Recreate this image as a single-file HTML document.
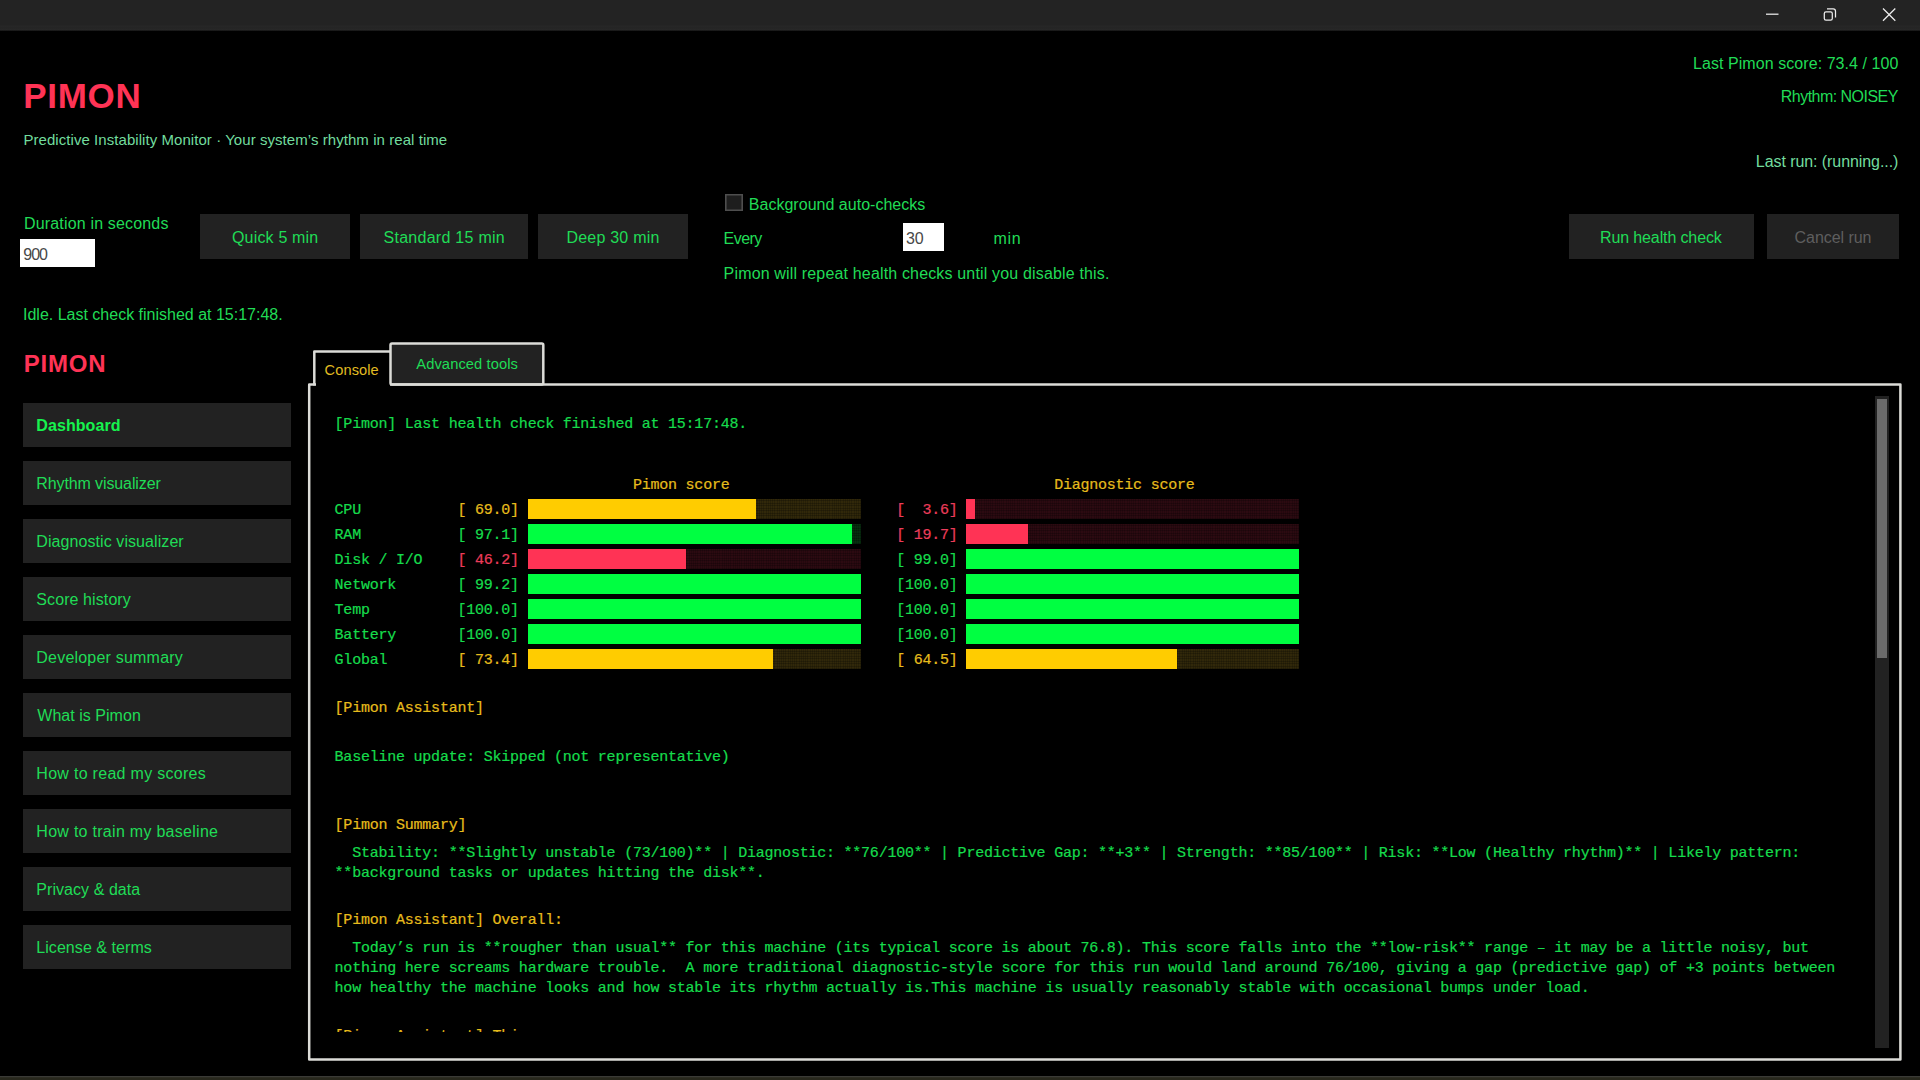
<!DOCTYPE html>
<html><head><meta charset="utf-8"><title>PIMON</title>
<style>
html,body{margin:0;padding:0;background:#000;}
body{width:1920px;height:1080px;position:relative;overflow:hidden;font-family:"Liberation Sans",sans-serif;}
.t{position:absolute;white-space:pre;line-height:40px;height:40px;font-family:"Liberation Sans",sans-serif;}
.m{position:absolute;white-space:pre;line-height:40px;height:40px;font-family:"Liberation Mono",monospace;font-size:15px;letter-spacing:-0.2266px;-webkit-text-stroke:0.22px currentColor;}
.box{position:absolute;background:#222;}
.sbtn{position:absolute;left:22.6px;width:268.2px;height:44.6px;background:#222;}
.bar{position:absolute;height:20px;background-image:repeating-linear-gradient(0deg,rgba(0,0,0,.22) 0 1px,rgba(0,0,0,0) 1px 2.5px),repeating-linear-gradient(90deg,rgba(0,0,0,.18) 0 1px,rgba(0,0,0,0) 1px 2.2px);}
.bar i{position:absolute;left:0;top:0;height:20px;display:block;}
#titlebar{position:absolute;left:0;top:0;width:1920px;height:31.4px;background:linear-gradient(#232323 0,#232323 25px,#272727 26px,#262626 27px,#242424 28px,#282828 29.2px,#262626 30.1px,#000 31.3px);}
#clip{position:absolute;left:310px;top:385px;width:1560px;height:646.6px;overflow:hidden;}
</style></head><body>
<div id="titlebar"></div>
<svg style="position:absolute;left:1740px;top:0" width="180" height="30" viewBox="0 0 180 30" fill="none" stroke="#ececec" stroke-width="1.25">
<path d="M26 14.2H38.5"/>
<rect x="84.3" y="11.8" width="8" height="8.4" rx="1.7"/>
<path d="M87 8.9H93.2A2.3 2.3 0 0 1 95.5 11.2V17.6"/>
<path d="M143 8.5L155.3 20.8M155.3 8.5L143 20.8"/>
</svg>
<div class="box" style="left:200px;top:214px;width:150.2px;height:44.5px"></div>
<div class="box" style="left:360.2px;top:214px;width:167.8px;height:44.5px"></div>
<div class="box" style="left:538px;top:214px;width:150px;height:44.5px"></div>
<div class="box" style="left:1569.3px;top:214px;width:184.6px;height:44.5px"></div>
<div class="box" style="left:1767.2px;top:214px;width:132px;height:44.5px;background:#212121"></div>
<div style="position:absolute;left:20px;top:239px;width:75px;height:27.6px;background:#fff"></div>
<div style="position:absolute;left:903px;top:223.3px;width:40.6px;height:27.3px;background:#fff"></div>
<div style="position:absolute;left:725.4px;top:194px;width:17.4px;height:17.2px;background:#1e1e1e;box-shadow:inset 0 0 0 1.6px #4e4e4e;"></div>
<div class="sbtn" style="top:402.8px"></div><div class="sbtn" style="top:460.8px"></div><div class="sbtn" style="top:518.8px"></div><div class="sbtn" style="top:576.8px"></div><div class="sbtn" style="top:634.8px"></div><div class="sbtn" style="top:692.8px"></div><div class="sbtn" style="top:750.8px"></div><div class="sbtn" style="top:808.8px"></div><div class="sbtn" style="top:866.8px"></div><div class="sbtn" style="top:924.8px"></div>
<!-- notebook frame -->
<svg style="position:absolute;left:0;top:330px" width="1920" height="750" viewBox="0 330 1920 750" fill="none" stroke="#dcdcd8" stroke-width="2.5" stroke-linejoin="round">
<rect x="390.5" y="343.5" width="152.8" height="41" rx="1.5" fill="#222"/>
<path d="M316 384.4H309.2V1059.5H1900.4V384.4H390"/>
<path d="M314.3 385.6V351.4H390"/>
</svg>
<!-- scrollbar -->
<div style="position:absolute;left:1875px;top:396px;width:14px;height:652px;background:#222"></div>
<div style="position:absolute;left:1877px;top:399px;width:10.3px;height:258.5px;background:#6b6b6b"></div>
<div class="t" style="left:23.20px;top:76.40px;font-size:35px;color:#ff3355;letter-spacing:0.716px;font-weight:700;">PIMON</div>
<div class="t" style="left:23.40px;top:120.00px;font-size:15px;color:#72dc9e;letter-spacing:0.060px;">Predictive Instability Monitor · Your system’s rhythm in real time</div>
<div class="t" style="left:1693.00px;top:43.60px;font-size:16px;color:#20dc56;letter-spacing:0.064px;">Last Pimon score: 73.4 / 100</div>
<div class="t" style="left:1780.80px;top:76.80px;font-size:16px;color:#20dc56;letter-spacing:-0.530px;">Rhythm: NOISEY</div>
<div class="t" style="left:1755.80px;top:142.40px;font-size:16px;color:#72dc9e;letter-spacing:-0.070px;">Last run: (running...)</div>
<div class="t" style="left:24.00px;top:204.00px;font-size:16px;color:#20dc56;letter-spacing:0.165px;">Duration in seconds</div>
<div class="t" style="left:23.20px;top:235.40px;font-size:16px;color:#484848;letter-spacing:-0.952px;">900</div>
<div class="t" style="left:232.00px;top:218.00px;font-size:16px;color:#20dc56;letter-spacing:0.173px;">Quick 5 min</div>
<div class="t" style="left:383.50px;top:218.00px;font-size:16px;color:#20dc56;letter-spacing:0.271px;">Standard 15 min</div>
<div class="t" style="left:566.40px;top:218.00px;font-size:16px;color:#20dc56;letter-spacing:0.228px;">Deep 30 min</div>
<div class="t" style="left:1600.00px;top:218.00px;font-size:16px;color:#20dc56;letter-spacing:-0.123px;">Run health check</div>
<div class="t" style="left:1794.60px;top:218.00px;font-size:16px;color:#5e5e5e;letter-spacing:-0.053px;">Cancel run</div>
<div class="t" style="left:748.80px;top:184.50px;font-size:16px;color:#20dc56;letter-spacing:0.019px;">Background auto-checks</div>
<div class="t" style="left:723.60px;top:219.00px;font-size:16px;color:#20dc56;letter-spacing:-0.552px;">Every</div>
<div class="t" style="left:906.10px;top:219.00px;font-size:16px;color:#484848;letter-spacing:-0.197px;">30</div>
<div class="t" style="left:993.60px;top:219.00px;font-size:16px;color:#20dc56;letter-spacing:0.609px;">min</div>
<div class="t" style="left:723.60px;top:254.40px;font-size:16px;color:#20dc56;letter-spacing:0.161px;">Pimon will repeat health checks until you disable this.</div>
<div class="t" style="left:23.00px;top:295.00px;font-size:16px;color:#20dc56;letter-spacing:-0.001px;">Idle. Last check finished at 15:17:48.</div>
<div class="t" style="left:23.80px;top:343.60px;font-size:24px;color:#ff3355;letter-spacing:0.782px;font-weight:700;">PIMON</div>
<div class="t" style="left:36.30px;top:406.30px;font-size:16px;color:#16f24e;letter-spacing:0.078px;font-weight:700;">Dashboard</div>
<div class="t" style="left:36.30px;top:464.30px;font-size:16px;color:#20dc56;letter-spacing:-0.110px;">Rhythm visualizer</div>
<div class="t" style="left:36.30px;top:522.30px;font-size:16px;color:#20dc56;letter-spacing:0.078px;">Diagnostic visualizer</div>
<div class="t" style="left:36.30px;top:580.30px;font-size:16px;color:#20dc56;letter-spacing:0.094px;">Score history</div>
<div class="t" style="left:36.30px;top:638.30px;font-size:16px;color:#20dc56;letter-spacing:0.209px;">Developer summary</div>
<div class="t" style="left:37.30px;top:696.30px;font-size:16px;color:#20dc56;letter-spacing:0.030px;">What is Pimon</div>
<div class="t" style="left:36.30px;top:754.30px;font-size:16px;color:#20dc56;letter-spacing:0.295px;">How to read my scores</div>
<div class="t" style="left:36.30px;top:812.30px;font-size:16px;color:#20dc56;letter-spacing:0.283px;">How to train my baseline</div>
<div class="t" style="left:36.30px;top:870.30px;font-size:16px;color:#20dc56;letter-spacing:0.057px;">Privacy &amp; data</div>
<div class="t" style="left:36.30px;top:928.30px;font-size:16px;color:#20dc56;letter-spacing:0.056px;">License &amp; terms</div>
<div class="t" style="left:324.60px;top:350.20px;font-size:14.6px;color:#e2bc22;letter-spacing:0.092px;">Console</div>
<div class="t" style="left:416.30px;top:344.20px;font-size:14.7px;color:#20dc56;letter-spacing:0.089px;">Advanced tools</div>
<div id="clip">
<div class="bar" style="left:218.00px;top:114.00px;width:332.96px;background-color:#31280a"><i style="width:227.81px;background:#ffcc00"></i></div>
<div class="bar" style="left:656.30px;top:114.00px;width:332.96px;background-color:#2c0a11"><i style="width:8.76px;background:#ff3355"></i></div>
<div class="bar" style="left:218.00px;top:139.00px;width:332.96px;background-color:#06300f"><i style="width:324.19px;background:#00ff41"></i></div>
<div class="bar" style="left:656.30px;top:139.00px;width:332.96px;background-color:#2c0a11"><i style="width:61.33px;background:#ff3355"></i></div>
<div class="bar" style="left:218.00px;top:164.00px;width:332.96px;background-color:#2c0a11"><i style="width:157.72px;background:#ff3355"></i></div>
<div class="bar" style="left:656.30px;top:164.00px;width:332.96px;background-color:#06300f"><i style="width:332.96px;background:#00ff41"></i></div>
<div class="bar" style="left:218.00px;top:189.00px;width:332.96px;background-color:#06300f"><i style="width:332.96px;background:#00ff41"></i></div>
<div class="bar" style="left:656.30px;top:189.00px;width:332.96px;background-color:#06300f"><i style="width:332.96px;background:#00ff41"></i></div>
<div class="bar" style="left:218.00px;top:214.00px;width:332.96px;background-color:#06300f"><i style="width:332.96px;background:#00ff41"></i></div>
<div class="bar" style="left:656.30px;top:214.00px;width:332.96px;background-color:#06300f"><i style="width:332.96px;background:#00ff41"></i></div>
<div class="bar" style="left:218.00px;top:239.00px;width:332.96px;background-color:#06300f"><i style="width:332.96px;background:#00ff41"></i></div>
<div class="bar" style="left:656.30px;top:239.00px;width:332.96px;background-color:#06300f"><i style="width:332.96px;background:#00ff41"></i></div>
<div class="bar" style="left:218.00px;top:264.00px;width:332.96px;background-color:#31280a"><i style="width:245.34px;background:#ffcc00"></i></div>
<div class="bar" style="left:656.30px;top:264.00px;width:332.96px;background-color:#31280a"><i style="width:210.29px;background:#ffcc00"></i></div>
<div class="m" style="left:24.60px;top:19.55px;color:#16dc4c">[Pimon] Last health check finished at 15:17:48.</div>
<div class="m" style="left:322.95px;top:81.05px;color:#e6bc1c">Pimon score</div>
<div class="m" style="left:744.15px;top:81.05px;color:#e6bc1c">Diagnostic score</div>
<div class="m" style="left:24.60px;top:106.25px;color:#16dc4c">CPU</div>
<div class="m" style="left:147.45px;top:106.25px;color:#e6bc1c">[ 69.0]</div>
<div class="m" style="left:586.20px;top:106.25px;color:#ec3c5a">[  3.6]</div>
<div class="m" style="left:24.60px;top:131.25px;color:#16dc4c">RAM</div>
<div class="m" style="left:147.45px;top:131.25px;color:#16dc4c">[ 97.1]</div>
<div class="m" style="left:586.20px;top:131.25px;color:#ec3c5a">[ 19.7]</div>
<div class="m" style="left:24.60px;top:156.25px;color:#16dc4c">Disk / I/O</div>
<div class="m" style="left:147.45px;top:156.25px;color:#ec3c5a">[ 46.2]</div>
<div class="m" style="left:586.20px;top:156.25px;color:#16dc4c">[ 99.0]</div>
<div class="m" style="left:24.60px;top:181.25px;color:#16dc4c">Network</div>
<div class="m" style="left:147.45px;top:181.25px;color:#16dc4c">[ 99.2]</div>
<div class="m" style="left:586.20px;top:181.25px;color:#16dc4c">[100.0]</div>
<div class="m" style="left:24.60px;top:206.25px;color:#16dc4c">Temp</div>
<div class="m" style="left:147.45px;top:206.25px;color:#16dc4c">[100.0]</div>
<div class="m" style="left:586.20px;top:206.25px;color:#16dc4c">[100.0]</div>
<div class="m" style="left:24.60px;top:231.25px;color:#16dc4c">Battery</div>
<div class="m" style="left:147.45px;top:231.25px;color:#16dc4c">[100.0]</div>
<div class="m" style="left:586.20px;top:231.25px;color:#16dc4c">[100.0]</div>
<div class="m" style="left:24.60px;top:256.25px;color:#16dc4c">Global</div>
<div class="m" style="left:147.45px;top:256.25px;color:#e6bc1c">[ 73.4]</div>
<div class="m" style="left:586.20px;top:256.25px;color:#e6bc1c">[ 64.5]</div>
<div class="m" style="left:24.60px;top:304.05px;color:#e6bc1c">[Pimon Assistant]</div>
<div class="m" style="left:24.60px;top:352.55px;color:#16dc4c">Baseline update: Skipped (not representative)</div>
<div class="m" style="left:24.60px;top:421.35px;color:#e6bc1c">[Pimon Summary]</div>
<div class="m" style="left:24.60px;top:448.85px;color:#16dc4c">  Stability: **Slightly unstable (73/100)** | Diagnostic: **76/100** | Predictive Gap: **+3** | Strength: **85/100** | Risk: **Low (Healthy rhythm)** | Likely pattern:</div>
<div class="m" style="left:24.60px;top:468.75px;color:#16dc4c">**background tasks or updates hitting the disk**.</div>
<div class="m" style="left:24.60px;top:516.25px;color:#e6bc1c">[Pimon Assistant] Overall:</div>
<div class="m" style="left:24.60px;top:543.85px;color:#16dc4c">  Today’s run is **rougher than usual** for this machine (its typical score is about 76.8). This score falls into the **low-risk** range – it may be a little noisy, but</div>
<div class="m" style="left:24.60px;top:563.65px;color:#16dc4c">nothing here screams hardware trouble.  A more traditional diagnostic-style score for this run would land around 76/100, giving a gap (predictive gap) of +3 points between</div>
<div class="m" style="left:24.60px;top:583.95px;color:#16dc4c">how healthy the machine looks and how stable its rhythm actually is.This machine is usually reasonably stable with occasional bumps under load.</div>
<div class="m" style="left:24.60px;top:632.35px;color:#e6bc1c">[Pimon Assistant] This means:</div>
</div>
<div style="position:absolute;left:0;top:1075.6px;width:1920px;height:5px;background:linear-gradient(#3a3a36 0,#3a3a36 1.2px,#27271c 1.6px)"></div>
</body></html>
